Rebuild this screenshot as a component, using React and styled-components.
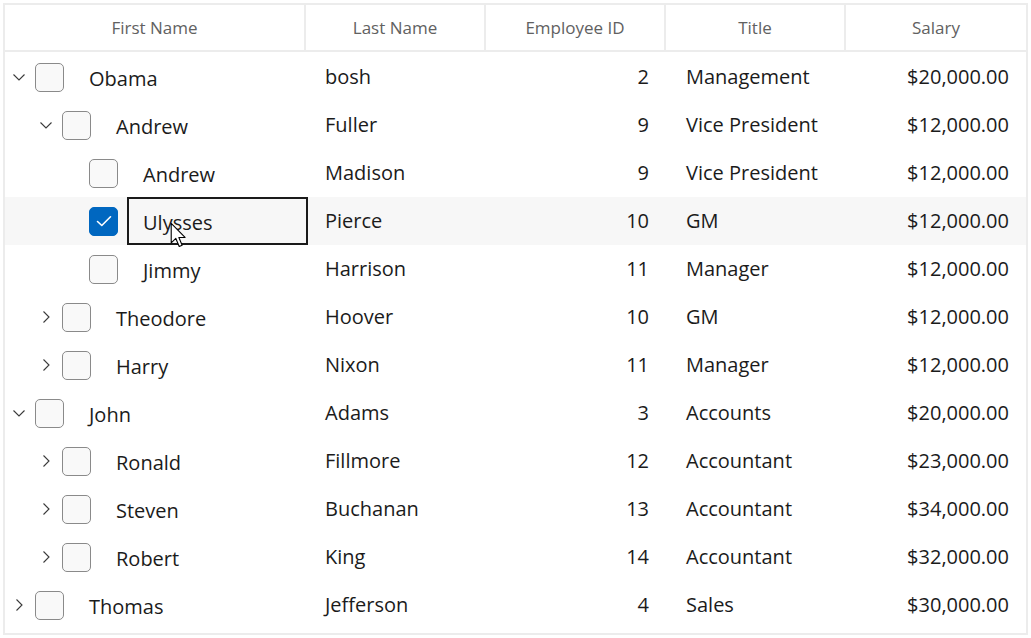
import React from 'react';
import styled, { createGlobalStyle } from 'styled-components';

const GlobalStyle = createGlobalStyle`
  body {
    margin: 0;
    background: #ffffff;
    font-family: "Open Sans", "Noto Sans", sans-serif;
    color: #1b1b1b;
  }
`

const COLUMNS = [
  { key: "first", label: "First Name", width: 301 },
  { key: "last", label: "Last Name", width: 180 },
  { key: "id", label: "Employee ID", width: 180 },
  { key: "title", label: "Title", width: 180 },
  { key: "salary", label: "Salary", width: 180 }
]

const ROWS = [
  { first: "Obama", last: "bosh", id: 2, title: "Management", salary: "$20,000.00", level: 0, toggle: "open" },
  { first: "Andrew", last: "Fuller", id: 9, title: "Vice President", salary: "$12,000.00", level: 1, toggle: "open" },
  { first: "Andrew", last: "Madison", id: 9, title: "Vice President", salary: "$12,000.00", level: 2 },
  { first: "Ulysses", last: "Pierce", id: 10, title: "GM", salary: "$12,000.00", level: 2, checked: true, selected: true },
  { first: "Jimmy", last: "Harrison", id: 11, title: "Manager", salary: "$12,000.00", level: 2 },
  { first: "Theodore", last: "Hoover", id: 10, title: "GM", salary: "$12,000.00", level: 1, toggle: "closed" },
  { first: "Harry", last: "Nixon", id: 11, title: "Manager", salary: "$12,000.00", level: 1, toggle: "closed" },
  { first: "John", last: "Adams", id: 3, title: "Accounts", salary: "$20,000.00", level: 0, toggle: "open" },
  { first: "Ronald", last: "Fillmore", id: 12, title: "Accountant", salary: "$23,000.00", level: 1, toggle: "closed" },
  { first: "Steven", last: "Buchanan", id: 13, title: "Accountant", salary: "$34,000.00", level: 1, toggle: "closed" },
  { first: "Robert", last: "King", id: 14, title: "Accountant", salary: "$32,000.00", level: 1, toggle: "closed" },
  { first: "Thomas", last: "Jefferson", id: 4, title: "Sales", salary: "$30,000.00", level: 0, toggle: "closed" }
]

const TEMPLATE = COLUMNS.map(c => `${c.width}px`).join(" ")

const Page = styled.div`
  padding: 3px;
`

const Grid = styled.div`
  width: 1021px;
  height: 628px;
  border: 2px solid #ececec;
  position: relative;
`

const Header = styled.div`
  display: grid;
  grid-template-columns: ${TEMPLATE};
  height: 45px;
  border-bottom: 2px solid #ececec;
`

const HeaderCell = styled.div`
  display: flex;
  align-items: center;
  justify-content: center;
  font-size: 17px;
  color: #616161;
  border-right: ${p => (p.$last ? "none" : "2px solid #ececec")};
`

const Body = styled.div`
  padding-top: 1px;
`

const Row = styled.div`
  display: grid;
  grid-template-columns: ${TEMPLATE};
  height: 48px;
  background: ${p => (p.$selected ? "#f7f7f7" : "transparent")};
`

const Cell = styled.div`
  display: flex;
  align-items: center;
  font-size: 20px;
  justify-content: ${p => (p.$right ? "flex-end" : "flex-start")};
  padding: ${p => (p.$right ? "0 17px 2px 0" : `0 0 2px ${p.$inset || 19}px`)};
  white-space: nowrap;
`

const TreeCell = styled.div`
  display: flex;
  align-items: center;
  padding-left: ${p => 2 + p.$level * 27}px;
`

const Toggle = styled.div`
  width: 24px;
  height: 24px;
  display: flex;
  align-items: center;
  justify-content: center;
  flex-shrink: 0;
`

const Check = styled.div`
  width: 27px;
  height: 27px;
  margin-left: 4px;
  border-radius: 5px;
  flex-shrink: 0;
  box-sizing: content-box;
  border: 1px solid ${p => (p.$checked ? "#0067c0" : "#8a8a8a")};
  background: ${p => (p.$checked ? "#0067c0" : "#f9f9f9")};
  display: flex;
  align-items: center;
  justify-content: center;
`

const Content = styled.div`
  flex: 1;
  align-self: stretch;
  margin-left: 9px;
  margin-right: -2px;
  display: flex;
  align-items: center;
  padding: 2px 0 0 14px;
  font-size: 20px;
  white-space: nowrap;
  border: 2px solid ${p => (p.$focused ? "#1a1a1a" : "transparent")};
  position: relative;
`

const Cursor = styled.svg`
  position: absolute;
  left: 41px;
  top: 23px;
`

const Chevron = ({ open }) => (
  <svg width="14" height="14" viewBox="0 0 14 14">
    {open ? (
      <polyline points="1.5,4.5 7,10 12.5,4.5" fill="none" stroke="#3a3a3a" strokeWidth="1.1" />
    ) : (
      <polyline points="4.5,1.5 10,7 4.5,12.5" fill="none" stroke="#3a3a3a" strokeWidth="1.1" />
    )}
  </svg>
)

const Tick = () => (
  <svg width="18" height="18" viewBox="0 0 18 18">
    <polyline points="2.5,9.5 6.8,13.5 15.5,4.8" fill="none" stroke="#ffffff" strokeWidth="1.6" strokeLinecap="round" strokeLinejoin="round" />
  </svg>
)

const App = () => {
  return (
    <Page>
      <GlobalStyle />
      <Grid>
        <Header>
          {COLUMNS.map((c, i) => (
            <HeaderCell key={c.key} $last={i === COLUMNS.length - 1}>{c.label}</HeaderCell>
          ))}
        </Header>
        <Body>
          {ROWS.map((r, i) => (
            <Row key={i} $selected={r.selected}>
              <TreeCell $level={r.level}>
                <Toggle>{r.toggle && <Chevron open={r.toggle === "open"} />}</Toggle>
                <Check $checked={r.checked}>{r.checked && <Tick />}</Check>
                <Content $focused={r.selected}>
                  {r.first}
                  {r.selected && (
                    <Cursor width="17" height="27" viewBox="0 0 14 22">
                      <path d="M1 1 L1 17 L4.8 13.4 L7.6 20 L10 19 L7.3 12.6 L12.4 12.6 Z" fill="#ffffff" stroke="#000000" strokeWidth="0.9" strokeLinejoin="round" />
                    </Cursor>
                  )}
                </Content>
              </TreeCell>
              <Cell>{r.last}</Cell>
              <Cell $right>{r.id}</Cell>
              <Cell $inset={20}>{r.title}</Cell>
              <Cell $right>{r.salary}</Cell>
            </Row>
          ))}
        </Body>
      </Grid>
    </Page>
  )
}

export default App
